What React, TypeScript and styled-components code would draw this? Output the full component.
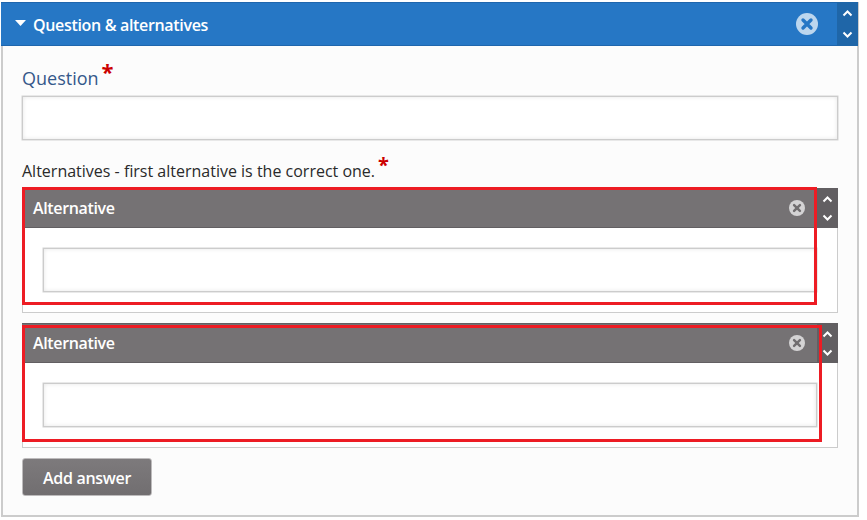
import React from "react";
import styled, { createGlobalStyle } from "styled-components";

const GlobalStyle = createGlobalStyle`
  html, body {
    margin: 0;
    padding: 0;
    background: #ffffff;
    font-family: "Open Sans", "Liberation Sans", sans-serif;
  }
  * { box-sizing: border-box; }
`;

const Page = styled.div`
  width: 867px;
  height: 520px;
  padding: 2px 0 0 1px;
`;

const Panel = styled.section`
  width: 858px;
  height: 515px;
  border: solid #cccccc;
  border-width: 0 2px 2px 2px;
  background: #fcfcfc;
`;

const BarRow = styled.div<{ $tone: "blue" | "gray"; $height: number }>`
  display: flex;
  align-items: center;
  height: ${(p) => p.$height}px;
  color: #ffffff;
  font-weight: 600;
  background: ${(p) => (p.$tone === "blue" ? "#2677c5" : "#757274")};
  border-top: 1px solid ${(p) => (p.$tone === "blue" ? "#1f66ad" : "#625f62")};
  border-bottom: 1px solid ${(p) => (p.$tone === "blue" ? "#1f66ad" : "#625f62")};
`;

const MainBar = styled(BarRow)`
  margin-left: -2px;
  width: 857px;
  font-size: 16px;
  letter-spacing: -0.33px;
  padding-left: 14px;
`;

const ItemBar = styled(BarRow)`
  font-size: 16px;
  letter-spacing: -0.35px;
  padding-left: 11px;
`;

const Caret = styled.svg`
  width: 11px;
  height: 6px;
  margin: 0 7px 3px 0;
  flex: none;
`;

const MainTitle = styled.span`
  flex: 1;
  padding-top: 1px;
`;

const ItemTitle = styled.span`
  flex: 1;
  padding-bottom: 1px;
`;

const IconGap = styled.span`
  flex: none;
  width: 19px;
`;

const MoveBox = styled.div<{ $tone: "blue" | "gray" }>`
  flex: none;
  width: 21px;
  align-self: stretch;
  margin: ${(p) => (p.$tone === "blue" ? "-1px 0" : "0")};
  display: flex;
  flex-direction: column;
  justify-content: center;
  align-items: center;
  gap: ${(p) => (p.$tone === "blue" ? "14px" : "11px")};
  background: ${(p) => (p.$tone === "blue" ? "#1f66a8" : "#625f62")};
`;

const CloseIcon = styled.svg<{ $size: number }>`
  flex: none;
  width: ${(p) => p.$size}px;
  height: ${(p) => p.$size}px;
`;

const Body = styled.div`
  padding: 14px 19px 0 19px;
`;

const QuestionLabel = styled.div`
  font-size: 18px;
  line-height: 27px;
  height: 36px;
  color: #35588a;
`;

const AltLabel = styled.div`
  margin-top: 15px;
  height: 33px;
  font-size: 16px;
  line-height: 24px;
  color: #2a2a2a;
`;

const Star = styled.span<{ $size: number }>`
  display: inline-block;
  color: #cc0000;
  font-weight: 700;
  font-size: ${(p) => p.$size}px;
  line-height: 1;
  margin-left: 3px;
  vertical-align: 5px;
`;

const TextInput = styled.div`
  height: 44px;
  background: #ffffff;
  border: 1px solid #cccccc;
  box-shadow: 0 0 0 0.5px #d4d4d4, inset 0 0 4px rgba(0, 0, 0, 0.1);
`;

const AltItem = styled.div`
  position: relative;
  margin-bottom: 10px;
`;

const AltTop = styled.div`
  display: flex;
  height: 40px;
`;

const AltHeader = styled(ItemBar)`
  flex: 1;
  padding-right: 12px;
`;

const AltBody = styled.div`
  height: 85px;
  padding: 20px 20px 0 20px;
  background: #ffffff;
  border: solid #cccccc;
  border-width: 0 1px 1px 1px;
`;

const AddButton = styled.button`
  display: block;
  width: 130px;
  height: 38px;
  margin-top: 1px;
  padding: 1px 0 0;
  color: #ffffff;
  font: 600 16px "Open Sans", "Liberation Sans", sans-serif;
  letter-spacing: -0.3px;
  background: linear-gradient(#7d7a7c, #716e70);
  border: 1px solid #bdbbbc;
  border-radius: 3px;
`;

const Annotation = styled.div<{ $top: number; $width: number; $height: number }>`
  position: absolute;
  left: 0;
  top: ${(p) => p.$top}px;
  width: ${(p) => p.$width}px;
  height: ${(p) => p.$height}px;
  border: 3px solid #ed1c24;
  pointer-events: none;
`;

const CloseGlyph = ({ size, fill, cross }: { size: number; fill: string; cross: string }) => (
  <CloseIcon $size={size} viewBox="0 0 22 22">
    <circle cx="11" cy="11" r="11" fill={fill} />
    <path d="M7 7l8 8M15 7l-8 8" stroke={cross} strokeWidth="3.4" strokeLinecap="round" />
  </CloseIcon>
);

const MoveButtons = ({ tone }: { tone: "blue" | "gray" }) => (
  <MoveBox $tone={tone}>
    <svg width="11" height="7" viewBox="0 0 11 7">
      <path d="M1.5 5.5l4-4 4 4" fill="none" stroke="#fff" strokeWidth="2" />
    </svg>
    <svg width="11" height="7" viewBox="0 0 11 7">
      <path d="M1.5 1.5l4 4 4-4" fill="none" stroke="#fff" strokeWidth="2" />
    </svg>
  </MoveBox>
);

const Alternative = ({ frameTop, frameWidth, frameHeight }: { frameTop: number; frameWidth: number; frameHeight: number }) => (
  <AltItem>
    <AltTop>
      <AltHeader $tone="gray" $height={40}>
        <ItemTitle>Alternative</ItemTitle>
        <CloseGlyph size={16} fill="#d4d3d4" cross="#716e70" />
      </AltHeader>
      <MoveButtons tone="gray" />
    </AltTop>
    <AltBody>
      <TextInput />
    </AltBody>
    <Annotation $top={frameTop} $width={frameWidth} $height={frameHeight} />
  </AltItem>
);

const App: React.FC = () => {
  return (
    <Page>
      <GlobalStyle />
      <Panel>
        <MainBar $tone="blue" $height={44}>
          <Caret viewBox="0 0 11 6">
            <path d="M0 0h11L5.5 6z" fill="#fff" />
          </Caret>
          <MainTitle>Question &amp; alternatives</MainTitle>
          <CloseGlyph size={22} fill="#bcd6ee" cross="#2677c5" />
          <IconGap />
          <MoveButtons tone="blue" />
        </MainBar>
        <Body>
          <QuestionLabel>
            Question<Star $size={22}>*</Star>
          </QuestionLabel>
          <TextInput />
          <AltLabel>
            Alternatives - first alternative is the correct one.<Star $size={20}>*</Star>
          </AltLabel>
          <Alternative frameTop={-1} frameWidth={795} frameHeight={118} />
          <Alternative frameTop={2} frameWidth={800} frameHeight={117} />
          <AddButton>Add answer</AddButton>
        </Body>
      </Panel>
    </Page>
  );
};

export default App;
